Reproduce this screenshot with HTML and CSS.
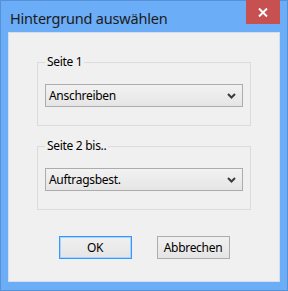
FILE: index.html
```html
<!DOCTYPE html>
<html lang="de">
<head>
    <meta charset="UTF-8">
    <title>Hintergrund auswählen</title>
    <link rel="stylesheet" href="styles.css">
</head>
<body>
    <div class="window">
        <div class="titlebar">
            <span class="title">Hintergrund auswählen</span>
            <div class="close">
                <svg width="10" height="9" viewBox="0 0 10 9">
                    <path d="M1 0.5 L9 8.5 M9 0.5 L1 8.5" stroke="#fff" stroke-width="2"/>
                </svg>
            </div>
        </div>
        <div class="client">
            <fieldset class="group">
                <legend>Seite 1</legend>
                <div class="combo">
                    <span>Anschreiben</span>
                    <svg width="9" height="6" viewBox="0 0 9 6">
                        <path d="M1 1 L4.5 4.5 L8 1" fill="none" stroke="#3c3c3c" stroke-width="2"/>
                    </svg>
                </div>
            </fieldset>
            <fieldset class="group second">
                <legend>Seite 2 bis..</legend>
                <div class="combo">
                    <span>Auftragsbest.</span>
                    <svg width="9" height="6" viewBox="0 0 9 6">
                        <path d="M1 1 L4.5 4.5 L8 1" fill="none" stroke="#3c3c3c" stroke-width="2"/>
                    </svg>
                </div>
            </fieldset>
            <div class="buttons">
                <button class="btn default">OK</button>
                <button class="btn">Abbrechen</button>
            </div>
        </div>
    </div>
</body>
</html>
```
FILE: styles.css
```css
html, body {
    margin: 0;
    padding: 0;
}
body {
    font-family: "Noto Sans", "Liberation Sans", sans-serif;
    font-size: 12px;
    letter-spacing: -0.3px;
    color: #000;
    background: #6badf6;
}
.window {
    width: 288px;
    height: 291px;
    box-sizing: border-box;
    border: 1px solid #5590d8;
    background: #6badf6;
    display: flex;
    flex-direction: column;
}
.titlebar {
    height: 31px;
    display: flex;
    align-items: flex-start;
}
.title {
    font-size: 14.5px;
    letter-spacing: -0.2px;
    color: #1b1b1b;
    padding-left: 9px;
    line-height: 16px;
    margin-top: 9px;
}
.close {
    margin-left: auto;
    margin-right: 7px;
    margin-top: -1px;
    width: 34px;
    height: 24px;
    background: #c75050;
    display: flex;
    align-items: center;
    justify-content: center;
}
.client {
    margin: 0 7px;
    height: 250px;
    box-sizing: border-box;
    border: 1px solid #d5dfeb;
    background: #f0f0f0;
}
.group {
    margin: 21px 0 0 28px;
    width: 214px;
    box-sizing: border-box;
    border: 1px solid #dcdcdc;
    padding: 0 7px 18px 7px;
}
.group.second {
    margin-top: 12px;
}
.group legend {
    padding: 0 2px;
    line-height: 16px;
    color: #000;
}
.combo {
    margin-top: 14px;
    height: 23px;
    box-sizing: border-box;
    border: 1px solid #acacac;
    background: linear-gradient(#f2f2f2, #e5e5e5);
    display: flex;
    align-items: center;
    padding: 0 6px 0 3px;
}
.combo span {
    flex: 1;
}
.buttons {
    display: flex;
    justify-content: center;
    gap: 25px;
    margin-top: 26px;
}
.btn {
    width: 73px;
    height: 23px;
    box-sizing: border-box;
    font-family: inherit;
    font-size: 12px;
    letter-spacing: -0.3px;
    color: #000;
    border: 1px solid #acacac;
    background: linear-gradient(#f0f0f0, #e5e5e5);
    padding: 0;
    margin: 0;
}
.btn.default {
    border-color: #3399ff;
    box-shadow: inset 0 0 0 1px #a8d2ff;
}
```
